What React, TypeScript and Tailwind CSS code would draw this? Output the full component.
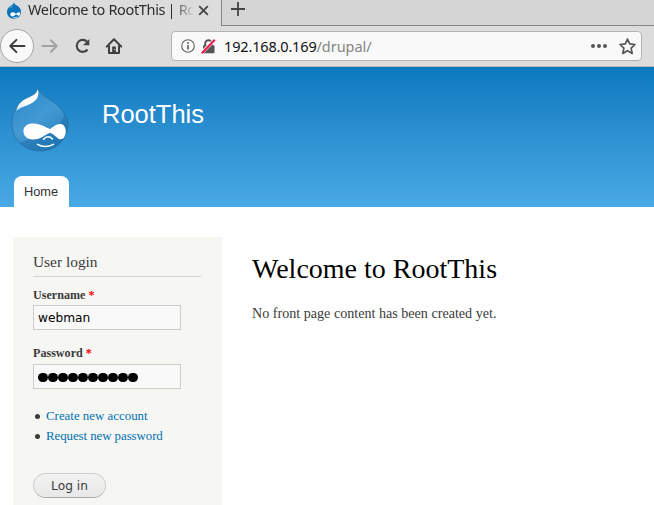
import React from "react";

function DropIcon() {
  return (
    <svg className="h-[17px] w-4 shrink-0" viewBox="0 0 16 17">
      <path d="M8 0.3C8.4 2.2 10 3 11.7 4C14 5.5 15 7.5 15 10C15 14 12 16.7 8 16.7S1 14 1 10C1 7.3 2.2 5.5 4.2 4.2C6 3.1 7.6 2.3 8 0.3Z" fill="#0b73b9" />
      <path d="M7.2 2.8C6.5 4 4 5 3 6.5C4.8 6 7 4.8 7.2 2.8Z" fill="#79b9e5" />
      <path d="M9.2 13C7.8 14.2 6.5 14.8 5.4 14.3C3.8 13.5 4 10.8 6.2 10.3C7.8 10 9 11.2 10 11.7C11 11.2 12.3 9.8 13.5 10.3C14.7 11 14.3 13.7 13 13.8C11.8 13.8 11 12.7 10 12.3Z" fill="#fff" />
      <path d="M7.3 15.3Q9.5 16.2 11.5 15" fill="none" stroke="#fff" strokeWidth=".8" />
    </svg>
  );
}

function DrupalLogo() {
  return (
    <svg className="h-[65px] w-[58px] shrink-0" viewBox="0 0 58 65">
      <defs>
        <linearGradient id="body" x1="0" y1="0" x2="0.7" y2="1">
          <stop offset="0" stopColor="#2488cb" />
          <stop offset=".55" stopColor="#4499d2" />
          <stop offset="1" stopColor="#2782c0" />
        </linearGradient>
        <linearGradient id="shine" x1="1" y1="0" x2="0" y2="1">
          <stop offset=".6" stopColor="#fff" />
          <stop offset="1" stopColor="#fff" stopOpacity=".75" />
        </linearGradient>
      </defs>
      <path d="M26.5 .3C28.5 6 32.5 9 38 12.2C43.5 15.5 48 19 51.5 24C55 29 57 32 57 37C57 53 44 64 29 64S.8 52 .8 36.5C.8 27 5 18.5 12 13.5C18 9.5 26.5 8.5 26.5 .3Z" fill="url(#body)" stroke="#286f9d" strokeWidth=".7" />
      <path d="M53 26C53 36 44 42 34 46C25 51 15 53 8 56C14 61 21 64 29 64C44 64 57 53 57 37C57 32 55.5 29 53 26Z" fill="#1767a0" opacity=".4" />
      <path d="M26.6 2C29 9 25.5 13.5 20.5 16.3C15 19.3 9.5 20 5.5 24C6 18.5 9.5 15 14 12.3C19.5 9.3 26 8 26.6 2Z" fill="url(#shine)" />
      <path d="M39 42C42 40 45.5 36.5 50 37C54 38 55.5 42.5 54.5 47C53.5 51.5 50.5 53.5 47.5 51.7C44.5 49.5 42 46.8 39 45.8C34.5 47.2 30 52.5 22 52.6C15.5 52.5 12.2 48.5 12.4 43.6C12.8 39 16.5 36.3 22.5 36.4C30 36.7 34.5 40 39 42Z" fill="#fff" />
      <path d="M32.5 52.3Q37 47.4 41.5 52M26.5 57.3Q34 61.7 42.5 57.3" fill="none" stroke="#fff" strokeWidth="1.5" strokeLinecap="round" />
    </svg>
  );
}

function TabBar() {
  return (
    <div className="flex h-[26px] shrink-0">
      <div className="flex w-[221px] shrink-0 bg-[#dcdcdc] pl-[6px] pt-[2px]">
        <DropIcon />
        <div className="-mt-[3px] ml-[6px] w-[165px] whitespace-nowrap text-[14.5px] leading-5 tracking-[-0.34px] text-[#2b2e2f] [mask-image:linear-gradient(to_right,black_144px,transparent_167px)]">Welcome to RootThis <span className="-ml-[1px]">| Ro</span></div>
        <svg className="ml-[5px] mt-[3px] size-[11px] shrink-0" viewBox="0 0 11 11"><path d="M1.2 1.2L9.8 9.8M9.8 1.2L1.2 9.8" stroke="#444" strokeWidth="1.8" /></svg>
      </div>
      <div className="flex-1 border-b border-l border-[#858585] bg-[#d5d5d5] pl-[9px] pt-[2px]">
        <svg className="size-[14px]" viewBox="0 0 14 14"><path d="M7 0V14M0 7H14" stroke="#444" strokeWidth="1.8" /></svg>
      </div>
    </div>
  );
}

function Toolbar() {
  return (
    <div className="flex h-[41px] shrink-0 items-center border-b border-[#b4b4b4] bg-[#dcdcdc]">
      <div className="flex size-[34px] shrink-0 items-center justify-center rounded-full border border-[#a4a4a4] bg-[#f9f9f9]">
        <svg className="size-[18px]" viewBox="0 0 18 18"><path d="M16.5 9H2.3M8.4 2.9L2.3 9L8.4 15.1" fill="none" stroke="#3e3e3e" strokeWidth="2" strokeLinejoin="round" strokeLinecap="round" /></svg>
      </div>
      <svg className="ml-[7px] size-[18px] shrink-0" viewBox="0 0 18 18"><path d="M1.5 9H15.7M10 3.3L15.7 9L10 14.7" fill="none" stroke="#a1a1a1" strokeWidth="2" strokeLinejoin="round" strokeLinecap="round" /></svg>
      <svg className="ml-[14px] size-[18px] shrink-0" viewBox="0 0 18 18"><path d="M14.2 4.8A6 6 0 1 0 14.5 12.5" fill="none" stroke="#444" strokeWidth="2.1" /><path d="M16.3 2V8.3H10Z" fill="#444" /></svg>
      <svg className="ml-[14px] size-[18px] shrink-0" viewBox="0 0 18 18"><path d="M1.7 9.6L9 2.3L16.3 9.6M4 9V16H14V9" fill="none" stroke="#3e3e3e" strokeWidth="2" strokeLinejoin="round" strokeLinecap="round" /><path d="M7.2 15.5V9.5H10.8V15.5Z" fill="#3e3e3e" /><path d="M9.2 12h.9v.9h-.9z" fill="#ddd" /></svg>
      <div className="ml-[48px] mr-3 flex h-[30px] flex-1 items-center rounded-[4px] border border-[#b3b3b3] bg-[#f9f9f9] pl-[9px] pr-[5px]">
        <svg className="size-[14px] shrink-0" viewBox="0 0 14 14"><circle cx="7" cy="7" r="6.3" fill="none" stroke="#606060" strokeWidth="1.1" /><path d="M7 6V10.6" stroke="#606060" strokeWidth="1.7" /><circle cx="7" cy="3.9" r="1" fill="#606060" /></svg>
        <svg className="ml-[6px] size-[15px] shrink-0" viewBox="0 0 15 15"><path d="M4.2 7V4.5A3.3 3.3 0 0 1 10.8 4.5V7" fill="none" stroke="#555" strokeWidth="2" /><rect x="2" y="6.3" width="11.5" height="8" rx="1" fill="#555" /><path d="M1.5 13L14 .5" stroke="#f9f9f9" strokeWidth="3.4" /><path d="M.8 14.2L13.8 .8" stroke="#f31245" strokeWidth="2" /></svg>
        <div className="ml-[8px] flex-1 whitespace-nowrap text-[14.5px] leading-5 tracking-[-0.16px] text-[#111]">192.168.0.169<span className="tracking-[-0.06px] text-[#858585]">/drupal/</span></div>
        <svg className="h-4 w-[18px]" viewBox="0 0 18 16"><g fill="#555"><circle cx="3" cy="8" r="2" /><circle cx="9" cy="8" r="2" /><circle cx="15" cy="8" r="2" /></g></svg>
        <svg className="ml-[11px] size-[17px]" viewBox="0 0 17 17"><path d="M8.5 1L10.7 5.9L16 6.5L12.1 10.1L13.2 15.4L8.5 12.7L3.8 15.4L4.9 10.1L1 6.5L6.3 5.9Z" fill="none" stroke="#555" strokeWidth="1.7" strokeLinejoin="round" /></svg>
      </div>
    </div>
  );
}

function FieldLabel({ children }: { children: React.ReactNode }) {
  return <div className="h-5 text-[12.1px] font-bold leading-5 text-[#3b3b3b]">{children} <span className="text-[#f00]">*</span></div>;
}

function LoginPanel() {
  return (
    <aside className="mt-[30px] ml-[12.5px] h-[268px] w-[209px] shrink-0 bg-[#f6f6f2] pl-[20.5px] pr-5 pt-[13px] font-['Liberation_Serif',serif]">
      <h2 className="h-[27px] w-[168px] border-b border-[#d3d3d3] text-[15.4px] leading-6 text-[#3b3b3b]">User login</h2>
      <div className="mt-2"><FieldLabel>Username</FieldLabel></div>
      <div className="h-[25px] w-[148px] border border-[#ccc] bg-[#f9f9f9] pl-1 pt-[1px] font-['DejaVu_Sans',sans-serif] text-[12.2px] leading-[22px] text-black">webman</div>
      <div className="mt-[13px]"><FieldLabel>Password</FieldLabel></div>
      <div className="mt-[1px] flex h-[25px] w-[148px] items-center border border-[#ccc] bg-[#f9f9f9] pl-[4px] pt-[2px]">
        {Array.from({ length: 10 }, (_, i) => <span key={i} className="h-[9.5px] w-[10px] rounded-full bg-black" />)}
      </div>
      <ul className="mt-[17px] text-[12.9px] leading-5 text-[#0071b3]">
        <li className="flex items-center"><span className="mr-[6.5px] ml-[1.5px] size-[5px] rounded-full bg-[#3b3b3b]" />Create new account</li>
        <li className="flex items-center tracking-[-0.07px]"><span className="mr-[6.5px] ml-[1.5px] size-[5px] rounded-full bg-[#3b3b3b]" />Request new password</li>
      </ul>
      <button className="mt-[27px] block h-[25px] w-[73px] rounded-full border border-[#ccc] border-b-[#aaa] bg-linear-to-b from-[#f3f3f3] to-[#e8e8e8] pt-[1px] font-['DejaVu_Sans',sans-serif] text-[12.2px] leading-[23px] text-[#3a3a3a]">Log in</button>
    </aside>
  );
}

export default function App() {
  return (
    <div className="flex h-[505px] w-[654px] flex-col overflow-hidden bg-white font-['Noto_Sans',sans-serif]">
      <TabBar />
      <Toolbar />
      <header className="flex h-[140px] shrink-0 flex-col justify-between bg-linear-to-b from-[#0779bf] to-[#48a9e4] font-['Liberation_Sans',sans-serif]">
        <div className="flex pl-[11px] pt-5">
          <DrupalLogo />
          <div className="ml-[33px] mt-[11px] text-[25.5px] leading-8 text-[#fffeff]">RootThis</div>
        </div>
        <nav className="ml-[14px] h-[31px] w-[55px] rounded-t-lg bg-white pl-[10px] text-[12.8px] leading-[31px] text-[#333]">Home</nav>
      </header>
      <div className="flex flex-1">
        <LoginPanel />
        <main className="ml-[30.5px] mt-[46px] font-['Liberation_Serif',serif]">
          <h1 className="text-[28px] leading-8 text-black">Welcome to RootThis</h1>
          <p className="mt-[18px] text-[14.12px] leading-5 text-[#3b3b3b]">No front page content has been created yet.</p>
        </main>
      </div>
    </div>
  );
}
